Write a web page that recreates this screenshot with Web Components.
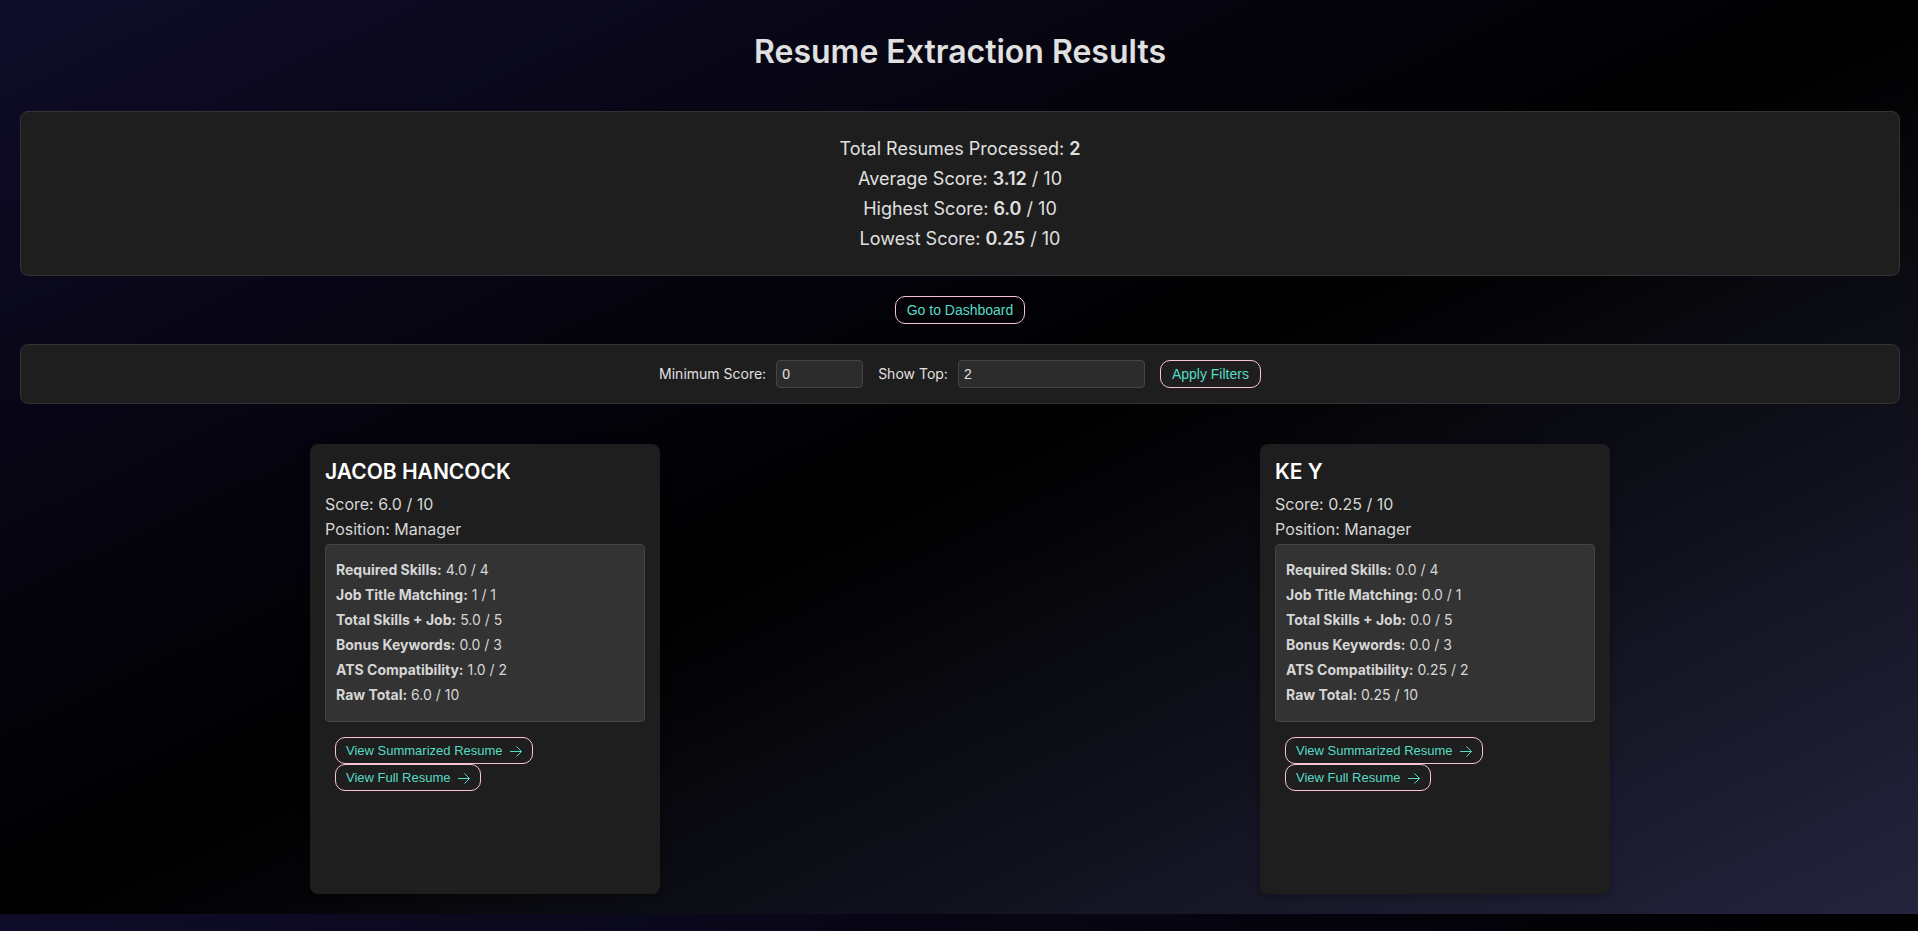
<!DOCTYPE html>
<html lang="en">
<head>
<meta charset="utf-8">
<title>Resume Extraction Results</title>
<style>
  body {
    margin: 0;
    color: #e0e0e0;
    font-family: Inter, "Liberation Sans", sans-serif;
    background: linear-gradient(to bottom right, #0f0c29, #000000, #24243e);
  }
</style>
</head>
<body>
<results-page></results-page>

<template id="results-page">
  <style>
    :host { display: block; padding: 32px 18px 20px 20px; }
    h1 { margin: 0 0 39px; font-size: 32px; line-height: 40px; font-weight: 600; text-align: center; }
    strong { font-weight: 600; }
    .summary p { margin: 0; font-size: 18px; line-height: 30px; text-align: center; }
    .actions { display: flex; justify-content: center; margin: 20px 0; }
    .cards { display: grid; grid-template-columns: repeat(2, minmax(0, 1fr)); gap: 20px; justify-items: center; margin-top: 40px; }
  </style>
  <h1>Resume Extraction Results</h1>
  <dark-panel class="summary" style="--pad: 22px 20px 21px">
    <p>Total Resumes Processed: <strong>2</strong></p>
    <p>Average Score: <strong>3.12</strong> / 10</p>
    <p>Highest Score: <strong>6.0</strong> / 10</p>
    <p>Lowest Score: <strong>0.25</strong> / 10</p>
  </dark-panel>
  <div class="actions"><pill-button>Go to Dashboard</pill-button></div>
  <dark-panel style="--pad: 15px"><score-filters></score-filters></dark-panel>
  <div class="cards">
    <resume-card name="JACOB HANCOCK" score="6.0" position="Manager" skills="4.0 / 4" job="1 / 1" total="5.0 / 5" bonus="0.0 / 3" ats="1.0 / 2" raw="6.0 / 10"></resume-card>
    <resume-card name="KE Y" score="0.25" position="Manager" skills="0.0 / 4" job="0.0 / 1" total="0.0 / 5" bonus="0.0 / 3" ats="0.25 / 2" raw="0.25 / 10"></resume-card>
  </div>
</template>

<template id="dark-panel">
  <style>
    :host { display: block; padding: var(--pad); background: #1e1e1e; border: 1px solid #333; border-radius: 8px; }
  </style>
  <slot></slot>
</template>

<template id="pill-button">
  <style>
    :host { display: block; }
    button {
      display: flex; align-items: center; gap: 7px; box-sizing: border-box;
      height: var(--pill-height, 28px); padding: 0 var(--pill-pad, 11px); margin: 0;
      border: 1px solid #f8c4d4; border-radius: 10px; background: transparent;
      color: #56dcc4; font: var(--pill-size, 14px) "Liberation Sans", Arial, sans-serif;
      white-space: nowrap; cursor: pointer;
    }
  </style>
  <button type="button"><slot></slot></button>
</template>

<template id="score-filters">
  <style>
    :host { display: block; }
    form { display: flex; flex-wrap: wrap; align-items: center; justify-content: center; gap: 15px; margin: 0; }
    .field { display: flex; align-items: center; gap: 10px; }
    label { font-size: 14px; line-height: 20px; }
    input {
      box-sizing: border-box; height: 28px; padding: 0 5px;
      border: 1px solid #444; border-radius: 4px; background: #2c2c2c; color: #e0e0e0;
      font: 14px "Liberation Sans", Arial, sans-serif; appearance: none;
    }
    #min { width: 87px; }
    #top { width: 187px; }
  </style>
  <form>
    <div class="field"><label for="min">Minimum Score:</label><input id="min" type="text" inputmode="decimal" value="0"></div>
    <div class="field"><label for="top">Show Top:</label><input id="top" type="text" inputmode="numeric" value="2"></div>
    <pill-button>Apply Filters</pill-button>
  </form>
</template>

<template id="resume-card">
  <style>
    :host {
      display: block; box-sizing: border-box; width: 350px; max-width: 100%; min-height: 450px; padding: 15px;
      background: #1e1e1e; border-radius: 8px; box-shadow: 0 2px 8px rgba(0, 0, 0, .3);
    }
    h2 { margin: 0 0 7px; font-size: 21px; line-height: 26px; font-weight: 600; color: #fff; }
    p { margin: 0; font-size: 16px; line-height: 25px; color: #d6d6d6; }
    .breakdown { margin: 2px 0 15px; padding: 12px 10px 14px; background: #333; border: 1px solid #444; border-radius: 4px; }
    .breakdown p { font-size: 14px; }
    .links { padding-left: 10px; display: flex; flex-direction: column; align-items: flex-start; --pill-height: 27px; --pill-size: 13px; --pill-pad: 10px; }
    svg { width: 12px; height: 12px; fill: none; stroke: currentColor; }
  </style>
  <h2 data-field="name"></h2>
  <p>Score: <span data-field="score"></span> / 10</p>
  <p>Position: <span data-field="position"></span></p>
  <div class="breakdown">
    <p><strong>Required Skills:</strong> <span data-field="skills"></span></p>
    <p><strong>Job Title Matching:</strong> <span data-field="job"></span></p>
    <p><strong>Total Skills + Job:</strong> <span data-field="total"></span></p>
    <p><strong>Bonus Keywords:</strong> <span data-field="bonus"></span></p>
    <p><strong>ATS Compatibility:</strong> <span data-field="ats"></span></p>
    <p><strong>Raw Total:</strong> <span data-field="raw"></span></p>
  </div>
  <div class="links">
    <pill-button>View Summarized Resume <svg viewBox="0 0 12 12" aria-hidden="true"><path d="M0 6.5H11.2M6.5 1.5L11.5 6.5L6.5 11.5"/></svg></pill-button>
    <pill-button>View Full Resume <svg viewBox="0 0 12 12" aria-hidden="true"><path d="M0 6.5H11.2M6.5 1.5L11.5 6.5L6.5 11.5"/></svg></pill-button>
  </div>
</template>

<script>
  class TemplateElement extends HTMLElement {
    constructor() {
      super();
      const template = document.getElementById(this.localName);
      this.attachShadow({ mode: "open" }).append(template.content.cloneNode(true));
    }
  }
  class DarkPanel extends TemplateElement {}
  class PillButton extends TemplateElement {}
  class ScoreFilters extends TemplateElement {}
  class ResumeCard extends TemplateElement {
    connectedCallback() {
      for (const node of this.shadowRoot.querySelectorAll("[data-field]")) {
        node.textContent = this.getAttribute(node.dataset.field);
      }
    }
  }
  class ResultsPage extends TemplateElement {}
  customElements.define("dark-panel", DarkPanel);
  customElements.define("pill-button", PillButton);
  customElements.define("score-filters", ScoreFilters);
  customElements.define("resume-card", ResumeCard);
  customElements.define("results-page", ResultsPage);
</script>
</body>
</html>
